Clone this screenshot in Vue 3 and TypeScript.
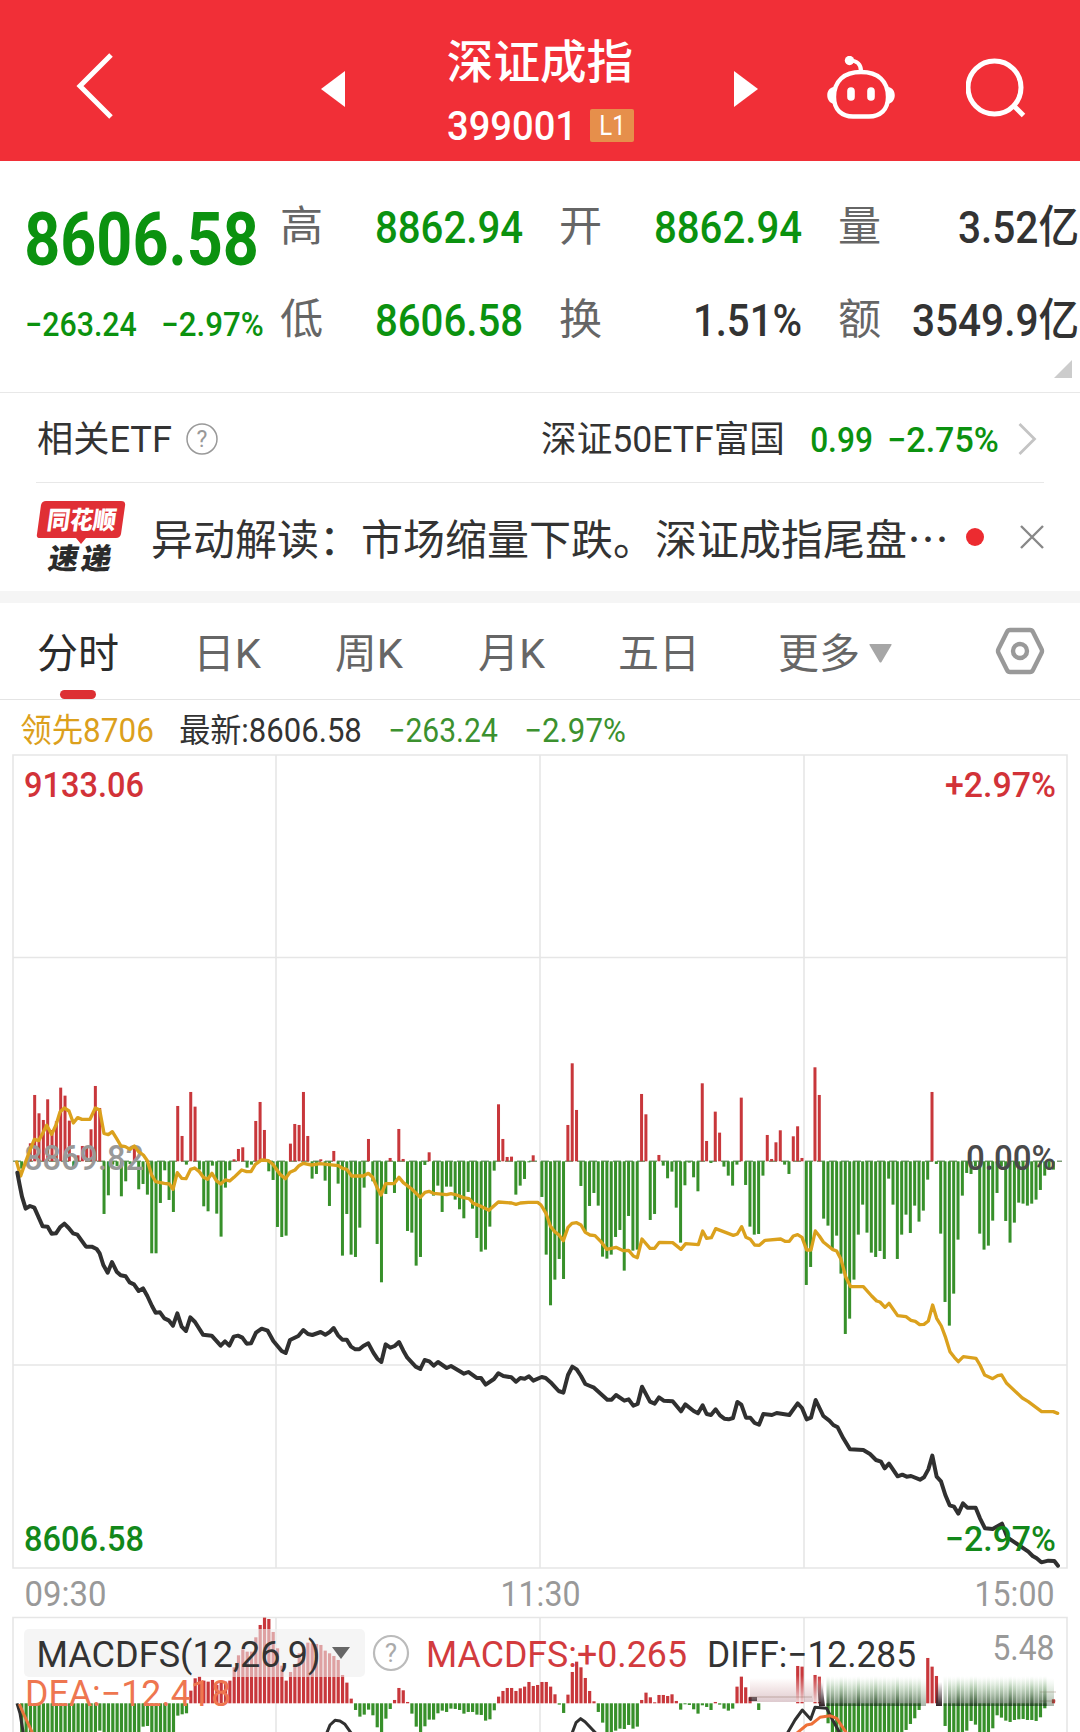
<script setup lang="ts">
import { defineComponent, h } from 'vue'

const FONT = 'Roboto, "Noto Sans CJK SC", sans-serif'

// One line of text fitted to a fixed width, centred on its own box
const T = defineComponent({
  props: {
    t: { type: String, required: true },
    w: { type: Number, required: true },
    s: { type: Number, required: true },
    c: { type: String, default: '#333' },
    b: { type: Number, default: 400 },
  },
  setup(p) {
    return () =>
      h('svg', { width: p.w, height: p.s, style: 'display:block;overflow:visible;flex:none' }, [
        h('text', {
          x: -p.s * 0.025, y: p.s * 0.856, textLength: p.w + p.s * 0.05, lengthAdjust: 'spacingAndGlyphs',
          'font-size': p.s, 'font-weight': p.b, 'font-family': FONT, fill: p.c,
        }, p.t),
      ])
  },
})

const GREEN = '#0b920f'
const quotes = [
  [
    { k: '高', v: '8862.94', w: 146, c: GREEN },
    { k: '开', v: '8862.94', w: 146, c: GREEN },
    { k: '量', v: '3.52亿', w: 119, c: '#333' },
  ],
  [
    { k: '低', v: '8606.58', w: 146, c: GREEN },
    { k: '换', v: '1.51%', w: 107, c: '#333' },
    { k: '额', v: '3549.9亿', w: 165, c: '#333' },
  ],
]

const STEP = 13.005
const bars = [
  -3, -22, -10, 54, 199, 144, 124, 186, 94, 120, 221, 197, 122, -18, 18, 46, 46, 96, 226, 160,
  -158, -102, -10, -14, -105, -60, -8, 42, -84, -68, -100, -276, -276, -125, -27, -116, -152, 166, 76, -10,
  208, 164, -25, -135, -150, -13, -157, -226, -79, -27, 6, 37, 42, -19, -10, 121, 178, 94, -30, -56,
  -197, -227, -223, 53, 112, 109, 208, 76, -52, -38, 6, -58, -134, 31, -67, -283, -158, -280, -287, -199,
  -79, 67, -60, -248, -363, -98, 10, -95, 97, 7, -209, -214, -313, -287, -11, 27, -103, -73, -152, -76,
  -76, -115, -144, -171, -92, -142, -230, -271, -265, -196, -28, 171, 67, 13, 14, -100, -73, -53, -3, 18,
  0, -107, -280, -432, -355, -293, -353, 109, 294, 154, -74, -210, -134, -95, -133, -286, -292, -280, -227, -206,
  -328, -164, -268, -265, 202, 141, -176, -158, 19, -13, -51, -31, -139, -244, -72, -4, -48, -90, 234, 61,
  -5, 149, 86, -16, -43, -73, -10, 191, -71, -196, -220, -218, -43, 79, 7, 57, 93, -10, -38, 75,
  105, 10, -371, -317, 282, 199, -172, -193, -260, -223, -337, -518, -472, -355, -220, -130, -214, -274, -287, -269,
  -293, -52, -130, -293, -220, -160, -215, -133, -181, -148, -55, 208, -8, -217, -422, -493, -397, -235, -103, -35,
  -38, -16, -217, -265, -253, -178, -95, -15, -179, -244, -184, -124, -127, -133, -127, -115, -86, -43, -25, -25,
]
const F = -92
const macd = [
  0, F, F, F, F, F, F, F, F, F, F, F, F, F, F, F, F, F, F, -82,
  F, F, F, F, F, F, F, F, F, -70, -68, F, F, F, F, F, F, -37, -33, -30,
  38, 75, 80, 68, 65, 70, 55, 65, 65, 68, 108, 144, 162, 155, 155, 198, 235, 257, 253, 214,
  165, 113, 68, 94, 118, 150, 168, 182, 180, 178, 175, 158, 150, 142, 130, 85, 62, 14, -20, -40,
  -34, -19, -36, -72, F, -46, -17, 10, 46, 39, 4, -31, -70, F, -69, -49, -49, -30, -22, -26,
  -16, -17, -20, -31, -26, -26, -34, -35, -52, -48, -21, 20, 37, 46, 46, 37, 45, 50, 64, 52,
  55, 64, 64, 50, 27, -4, -29, 26, 94, 125, 108, 76, 37, 6, -26, -58, F, F, -82, -76,
  -77, -65, -76, -70, 10, 32, 18, 3, 25, 25, 22, 27, 7, -19, -3, -5, -18, -31, -6, -11,
  -20, 4, -4, -16, -22, -16, 50, 80, 48, 18, 0, -20, 0, 0, 0, 0, 0, 0, 0, 0,
  112, 110, 0, 0, 85, 80, 0, -60, F, F, F, F, F, F, F, F, F, F, F, F,
  F, F, F, F, F, -80, -62, -45, -20, 0, 136, 110, 82, 0, -68, F, F, F, F, -82,
  -53, -64, F, F, F, -75, -36, -43, -52, -56, -50, -48, -47, -50, -50, -53, -42, -15, 0, 12,
]

const columns = (data: number[]) =>
  data.map((v, i) => ({ x: 47.5 + i * STEP, y: v > 0 ? -v : 0, h: Math.abs(v), c: v > 0 ? '#c8373b' : '#37902a' })).filter(d => d.h > 0)
const priceBars = columns(bars)
const macdBars = columns(macd)

// Fading bars on the right of the indicator panel
const fading = macd
  .map((v, i) => ({ i, x: 47.5 + i * STEP }))
  .filter(d => (d.i >= 187 && d.i <= 208) || (d.i >= 214 && d.i <= 237))
  .map(d => ({ x: d.x / 3, o: [187, 190, 194, 198, 203, 217, 220, 221, 229, 234, 237].includes(d.i) ? 0.85 : 0.4 + (d.i % 3) * 0.1 }))

// Every polyline segment list starts at its own horizontal offset
const shift = (dx: number, dy: number, s: string) =>
  s.split(' ').map(p => { const [x, y] = p.split(',').map(Number); return `${x + dx},${y + dy}` }).join(' ')

const price = [
  shift(0, 0, '52,398 58,430 66,470 77,506 90,498 103,503 116,532 128,559 143,560 155,581 168,580 180,562 193,551 206,564 219,580 232,584 258,620 275,620 290,627 299,640 310,675 323,698 336,666 350,695 362,706 377,709 389,727 402,733 416,753 429,745 442,768 456,798 467,818 480,817 493,835 506,841 519,857 532,820 545,860 558,873 571,832 585,846 609,884 635,887 662,917 675,904 688,917 701,890 714,887 727,893 740,911 753,910 768,878 785,866 803,872 820,903'),
  shift(810, 0, '35,933 47,939 60,900 85,888 100,870 114,882 127,885 152,876 166,884 178,877 191,864 204,886 217,899 230,899 243,920 256,928 268,928 280,918 295,910 310,938 322,956 334,966 347,913 361,923 374,918 387,906 400,932 412,953 437,980 451,987 464,960 478,964 491,977 504,966 530,984 543,978 582,1001 595,996 620,1014 633,1014 647,1034 672,1017 685,1000 700,1008 724,1012 738,1025 751,1014 764,1016 777,1009 790,1022'),
  shift(1620, 0, '5,1011 17,1014 35,1030 56,1053 70,1058 84,1005 97,980 110,988 123,1008 136,1032 150,1038 162,1043 202,1079 215,1079 228,1065 253,1082 266,1078 280,1097 293,1092 306,1040 330,1085 344,1091 357,1072 371,1082 398,1084 423,1114 436,1093 461,1113 474,1120 488,1096 500,1122 513,1125 527,1108 540,1126 553,1136 566,1138 579,1134 592,1086 604,1094 618,1133 631,1133 644,1149 657,1154 670,1122 696,1125 710,1119 748,1125 773,1090 786,1104 800,1138 813,1133'),
  shift(2160, 900, '287,180 310,228 328,242 340,255 353,262 370,295 390,328 430,330 450,342 468,360 483,365 494,385 507,371 533,409 547,404 560,410 573,408 600,419 612,412 625,388 637,347 650,410 663,424 676,465 689,496 702,500 715,521 729,490 742,503 767,503 780,535 795,565 818,567 846,551 862,592 925,635 938,648 950,655 964,667 985,662 1003,663 1014,677'),
].join(' ')

const lead = [
  shift(0, 0, '50,366 62,408 76,368 90,330 103,298 116,302 128,280 140,256 155,283 168,255 180,216 193,204 207,213 220,249 233,233 246,238 270,238 286,204 299,210 312,280 325,284 337,275 350,296 363,318 376,320 390,328 403,318 416,335 430,345 442,362 455,405 467,425 493,430 508,432 519,448 532,398 545,415 558,416 572,388 584,384 597,394 610,412 623,418 636,400 649,422 662,432 676,420 689,423 702,412 725,390 740,395 753,395 766,373 785,360 805,362 818,372'),
  shift(810, 0, '30,403 46,416 60,397 75,390 87,377 100,370 125,375 150,371 205,377 218,385 230,388 245,408 280,408 295,400 308,412 320,440 333,465 347,431 372,431 387,412 400,428 425,447 451,472 465,457 477,454 490,460 530,464 543,461 560,465 580,473 597,476 610,490 635,500 657,511 685,486 725,489 738,493 751,489 775,487 803,487'),
  shift(1620, 0, '3,495 18,520 31,558 44,575 57,585 70,602 84,562 96,550 110,548 123,555 136,577 150,585 165,587 182,604 200,628 228,622 250,632 266,631 280,648 292,653 306,597 330,625 344,625 358,607 398,608 423,628 437,611 475,614 488,573 500,595 514,593 527,566 580,586 592,582 605,560 618,592 631,598 644,615 658,616 675,601 722,597 735,604 748,604 760,588 773,584 786,592 800,630 813,630'),
  shift(2400, 0, '46,573 58,588 70,606 97,628 110,633 123,658 137,710 152,740 190,740 215,768 230,783 240,786 255,802 267,790 293,827 318,830 333,841 346,844 359,854 372,853 385,843 398,795 410,835 424,858 437,893 450,935 463,952 475,965 490,950 528,955 540,975 554,1005 578,1016 593,1007 605,1005 620,1030 667,1074 685,1085 725,1115 760,1115 773,1120'),
].join(' ')

// x, baseline, ink width, size, colour, weight
const labels = [
  { t: '9133.06', x: 25, y: 797, w: 118, s: 35, c: '#d23238', b: 500 },
  { t: '+2.97%', x: 946, y: 797, w: 109, s: 35, c: '#d23238', b: 500 },
  { t: '8869.82', x: 25, y: 1170, w: 118, s: 35, c: '#999', b: 500 },
  { t: '0.00%', x: 967, y: 1170, w: 88, s: 35, c: '#4a4a4a', b: 500 },
  { t: '8606.58', x: 25, y: 1551, w: 118, s: 35, c: '#12881a', b: 500 },
  { t: '−2.97%', x: 946, y: 1551, w: 109, s: 35, c: '#12881a', b: 500 },
  { t: '09:30', x: 25.5, y: 1606, w: 80, s: 35, c: '#999', b: 400 },
  { t: '11:30', x: 501.5, y: 1606, w: 78, s: 35, c: '#999', b: 400 },
  { t: '15:00', x: 975.5, y: 1606, w: 78, s: 35, c: '#999', b: 400 },
  { t: 'MACDFS(12,26,9)', x: 37.5, y: 1667, w: 282, s: 36, c: '#333', b: 400 },
  { t: 'MACDFS:+0.265', x: 427, y: 1666.5, w: 259, s: 36, c: '#d23b3e', b: 400 },
  { t: 'DIFF:−12.285', x: 708, y: 1666.5, w: 207, s: 36, c: '#333', b: 400 },
  { t: '5.48', x: 993.5, y: 1660, w: 60, s: 35, c: '#999', b: 400 },
  { t: 'DEA:−12.418', x: 26, y: 1706, w: 204, s: 36, c: '#ee7650', b: 400 },
]
</script>

<template>
  <div class="page">
    <header class="head">
      <svg class="back" width="44" height="70"><path d="M41 4 10 35 41 66" fill="none" stroke="#fff" stroke-width="5" /></svg>
      <svg class="prev" width="24" height="36"><path d="M0 18 24 0V36Z" fill="#fff" /></svg>
      <div class="title">
        <T t="深证成指" :w="184" :s="46" c="#fff" :b="500" />
        <div class="code">
          <T t="399001" :w="128" :s="41" c="#fff" :b="500" />
          <span class="level"><T t="L1" :w="25" :s="27" c="#fff" /></span>
        </div>
      </div>
      <svg class="next" width="24" height="36"><path d="M24 18 0 0V36Z" fill="#fff" /></svg>
      <svg class="robot" width="70" height="64" fill="none" stroke="#fff">
        <path d="M35 16C52 16 62 25 62 41C62 54 54 60.500 43 60.500H27C16 60.500 8 54 8 41C8 25 18 16 35 16Z" stroke-width="4.400" />
        <path d="M35 15C35 9 31 4.500 24 4.500" stroke-width="4.200" />
        <circle cx="23.500" cy="4.500" r="4.700" fill="#fff" stroke="none" />
        <path d="M8 31C-1 32-1 46 8 48ZM62 31C71 32 71 46 62 48Z" fill="#fff" stroke="none" />
        <path d="M25 35V41M45 35V41" stroke-width="7.600" stroke-linecap="round" />
      </svg>
      <svg class="search" width="62" height="62" fill="none" stroke="#fff"><circle cx="28.500" cy="29.500" r="26.500" stroke-width="5" /><path d="M48 48 57.500 57.500" stroke-width="5" /></svg>
    </header>

    <section class="quote">
      <div class="last">
        <T t="8606.58" :w="231" :s="74.5" :c="GREEN" :b="700" />
        <div class="chg"><T t="−263.24" :w="110" :s="33" :c="GREEN" :b="500" /><T t="−2.97%" :w="101" :s="33" :c="GREEN" :b="500" /></div>
      </div>
      <div class="rows">
        <div v-for="(r, i) in quotes" :key="i" class="row">
          <div v-for="q in r" :key="q.k" class="cell"><T :t="q.k" :w="41" :s="42.5" c="#666" /><T :t="q.v" :w="q.w" :s="45" :c="q.c" :b="500" /></div>
        </div>
      </div>
      <i class="corner"></i>
    </section>

    <section class="etf">
      <T t="相关ETF" :w="133" :s="36" />
      <svg class="q" width="32" height="32"><circle cx="16" cy="16" r="15" fill="none" stroke="#999" stroke-width="1.500" /><text x="16" y="24" text-anchor="middle" font-family="Roboto, sans-serif" font-size="23" fill="#999">?</text></svg>
      <div class="etf-right">
        <T t="深证50ETF富国" :w="242" :s="36" />
        <T t="0.99" :w="61" :s="35" :c="GREEN" :b="500" />
        <T t="−2.75%" :w="110" :s="35" :c="GREEN" :b="500" />
        <svg class="go" width="19" height="34"><path d="M1.500 2 16.500 17 1.500 32" fill="none" stroke="#c4c4c4" stroke-width="2.800" /></svg>
      </div>
    </section>

    <section class="news">
      <svg class="brand" width="90" height="76">
        <path d="M9 0H84Q89 0 88 5L84 33Q83 37 79 37H49L44 43 39 37H3Q-1 37 0 33L4 4Q5 0 9 0Z" fill="#e02f35" />
        <g font-family="'Noto Sans CJK SC', sans-serif" font-weight="900" font-size="26">
          <text transform="translate(9 28) skewX(-8)" textLength="69" lengthAdjust="spacingAndGlyphs" fill="#fff" font-size="25">同花顺</text>
          <text transform="translate(10 68) skewX(-10)" fill="#2b2b2b" textLength="30" lengthAdjust="spacingAndGlyphs" font-size="29">速</text>
          <text transform="translate(43 68) skewX(-10)" fill="#2b2b2b" textLength="30" lengthAdjust="spacingAndGlyphs" font-size="29">递</text>
        </g>
      </svg>
      <span class="headline">异动解读：市场缩量下跌。深证成指尾盘…</span>
      <i class="dot"></i>
      <svg class="close" width="26" height="26"><path d="M2 2 24 24M24 2 2 24" stroke="#888" stroke-width="2.400" /></svg>
    </section>

    <nav class="tabs">
      <div class="tab"><T t="分时" :w="80" :s="40.5" c="#2b2b2b" :b="400" /></div>
      <T class="t2" t="日K" :w="66" :s="40.5" c="#666" />
      <T class="t3" t="周K" :w="66" :s="40.5" c="#666" />
      <T class="t4" t="月K" :w="65" :s="40.5" c="#666" />
      <T class="t5" t="五日" :w="80" :s="40.5" c="#666" />
      <T class="t6" t="更多" :w="80" :s="40.5" c="#666" />
      <svg class="more" width="23" height="19"><path d="M1 0H22Q23 0 22.500 1L12.500 18Q11.500 19 10.500 18L.5 1Q0 0 1 0Z" fill="#a6a6a6" /></svg>
      <svg class="gear" width="50" height="48" fill="none" stroke="#999" stroke-width="4.400"><path d="M15 3H35Q37 3 38 5L46.500 22Q47.500 24 46.500 26L38 43Q37 45 35 45H15Q13 45 12 43L3.500 26Q2.500 24 3.500 22L12 5Q13 3 15 3Z" /><circle cx="25" cy="24" r="7" /></svg>
    </nav>

    <div class="legend">
      <T t="领先8706" :w="132" :s="32.5" c="#dca01c" />
      <T class="l2" t="最新:8606.58" :w="181" :s="32.5" />
      <T class="l3" t="−263.24" :w="108" :s="32.5" c="#3c912f" />
      <T class="l4" t="−2.97%" :w="100" :s="32.5" c="#3c912f" />
    </div>

    <svg class="chart" width="1080" height="978" viewBox="0 754 1080 978">
      <defs>
        <linearGradient id="fade" x1="0" y1="0" x2="0" y2="1"><stop offset="0" stop-color="#b8d8b4" stop-opacity="0" /><stop offset=".35" stop-color="#94b890" stop-opacity=".6" /><stop offset=".75" stop-color="#42663f" stop-opacity=".85" /><stop offset="1" stop-color="#1d3a1e" /></linearGradient>
        <linearGradient id="haze" x1="0" y1="0" x2="0" y2="1"><stop offset="0" stop-color="#a33" stop-opacity="0" /><stop offset="1" stop-color="#845" stop-opacity=".28" /></linearGradient>
        <linearGradient id="wash" x1="0" y1="0" x2="0" y2="1"><stop offset="0" stop-color="#fff" stop-opacity="0" /><stop offset="1" stop-color="#fff" stop-opacity=".75" /></linearGradient>
        <linearGradient id="dusk" x1="0" y1="0" x2="0" y2="1"><stop offset="0" stop-color="#412f34" stop-opacity="0" /><stop offset="1" stop-color="#301f24" /></linearGradient>
      </defs>
      <g fill="none" stroke="#e6e6e6" stroke-width="1.600">
        <path d="M13 755H1067V1568H13ZM13 957.500H1067M13 1365H1067M276 755V1568M540 755V1568M804 755V1568" />
        <path d="M13 1740V1617.500H1067V1740M276 1618V1732M540 1618V1732M804 1618V1732" />
      </g>
      <path d="M13 1161.300H1062" stroke="#7d9c76" stroke-width="1.600" stroke-dasharray="8 4" />
      <g transform="translate(0 1161.300) scale(.33333)">
        <rect v-for="(b, i) in priceBars" :key="i" :x="b.x" :y="b.y" width="9" :height="b.h" :fill="b.c" />
      </g>
      <g transform="translate(0 1703.300) scale(.33333)">
        <rect v-for="(b, i) in macdBars" :key="i" :x="b.x" :y="b.y" width="9.600" :height="b.h" :fill="b.c" />
      </g>
      <rect x="24" y="1629" width="341" height="48" rx="5" fill="#eee" fill-opacity=".58" />
      <path d="M332 1647H350L341 1659Z" fill="#666" />
      <g>
        <text v-for="l in labels.slice(0, 4)" :key="l.t" :x="l.x - 1" :y="l.y" :font-size="l.s" :font-weight="l.b" :textLength="l.w + 2" lengthAdjust="spacingAndGlyphs" :fill="l.c">{{ l.t }}</text>
      </g>
      <g transform="translate(0 1040) scale(.33333)" fill="none" stroke-linejoin="round" stroke-linecap="round">
        <polyline :points="lead" stroke="#dba11d" stroke-width="10" />
        <polyline :points="price" stroke="#303030" stroke-width="12" />
      </g>
      <rect x="750" y="1678" width="74" height="24" fill="url(#haze)" />
      <path d="M796 1675H804V1702H796ZM813 1675H824V1702H813Z" fill="url(#wash)" />
      <path d="M749 1697H812M1040 1692H1056M1040 1701H1056" stroke="#865" stroke-opacity=".4" />
      <path d="M749 1697H757V1701H749ZM817 1682H822L825 1706H819ZM936 1682H942V1706H936Z" fill="url(#dusk)" />
      <rect x="830" y="1678" width="96" height="28" fill="url(#fade)" opacity=".38" />
      <rect x="948" y="1678" width="106" height="28" fill="url(#fade)" opacity=".38" />
      <rect v-for="(f, i) in fading" :key="'f' + i" :x="f.x" y="1676" width="3.300" height="30" fill="url(#fade)" :opacity="f.o" />
      <g transform="translate(0 1500) scale(.33333)" fill="none" stroke-linejoin="round" stroke-width="9">
        <polyline points="51,610 60,640 70,700" stroke="#303030" />
        <polyline points="58,612 70,640 98,700" stroke="#e8743c" />
        <polyline points="980,700 990,675 1005,661 1020,663 1035,673 1054,700" stroke="#303030" />
        <polyline points="1716,700 1728,668 1742,656 1755,665 1788,700" stroke="#303030" />
        <polyline points="2362,700 2385,660 2407,630 2432,658 2445,622 2480,625 2500,664 2520,700" stroke="#303030" />
        <polyline points="2390,700 2420,675 2435,672 2460,652 2490,647 2510,655 2540,700" stroke="#ee7038" />
      </g>
      <g>
        <text v-for="l in labels.slice(4)" :key="l.t" :x="l.x - 1" :y="l.y" :font-size="l.s" :font-weight="l.b" :textLength="l.w + 2" lengthAdjust="spacingAndGlyphs" :fill="l.c">{{ l.t }}</text>
      </g>
      <circle cx="391" cy="1653" r="17" fill="none" stroke="#bbb" stroke-width="2.200" />
      <text x="391" y="1662" text-anchor="middle" font-size="26" fill="#aaa">?</text>
    </svg>
  </div>
</template>

<style scoped>
.page { width: 1080px; height: 1732px; overflow: hidden; background: #fff; font-family: Roboto, "Noto Sans CJK SC", sans-serif; }
svg { display: block; flex: none; }
.head { height: 161px; box-sizing: border-box; background: #f12f37; display: flex; align-items: flex-start; padding-left: 70px; }
.back { margin-top: 51px; }
.prev { margin: 71px 0 0 207px; }
.title { margin: 39px 0 0 103px; width: 187px; }
.code { display: flex; align-items: center; margin-top: 23px; height: 35px; }
.level { display: flex; align-items: center; justify-content: center; margin-left: 14px; width: 44px; height: 33px; background: #e68f4b; border-radius: 2px; }
.next { margin: 71px 0 0 99px; }
.robot { margin: 56px 0 0 68px; }
.search { margin: 58px 0 0 70px; }
.quote { height: 231px; display: flex; position: relative; border-bottom: 1.500px solid #e8e8e8; }
.last { width: 255px; padding: 40px 0 0 26px; }
.chg { display: flex; gap: 26px; margin-top: 32px; }
.rows { padding-top: 19px; }
.row { height: 93px; display: flex; gap: 38px; }
.cell { width: 241px; display: flex; align-items: center; justify-content: space-between; }
.cell:last-child { width: 239px; }
.corner { position: absolute; right: 8px; bottom: 14px; width: 18px; height: 18px; background: #ccc; clip-path: polygon(100% 0, 100% 100%, 0 100%); }
.etf { height: 90px; box-sizing: border-box; margin: 0 36px; padding: 3px 0 0 2px; display: flex; align-items: center; border-bottom: 1.500px solid #e8e8e8; }
.q { margin-left: 15px; }
.etf-right { margin-left: auto; margin-right: 7px; display: flex; align-items: center; }
.etf-right > :nth-child(2) { margin-left: 27px; }
.etf-right > :nth-child(3) { margin-left: 16px; }
.go { margin-left: 20px; }
.news { height: 108px; padding-left: 37px; display: flex; align-items: center; }
.brand { margin-top: 4px; overflow: visible; }
.headline { margin-left: 24px; width: 798px; font: 42px/60px "Noto Sans CJK SC", sans-serif; color: #333; white-space: nowrap; }
.dot { margin-left: 17px; width: 18px; height: 18px; border-radius: 50%; background: #ec2b30; }
.close { margin-left: 35px; }
.tabs { height: 109px; box-sizing: border-box; padding: 4px 0 0 38px; border-top: 12px solid #f5f5f5; border-bottom: 1.500px solid #e4e4e4; display: flex; align-items: center; }
.tab { position: relative; }
.tab::after { content: ""; position: absolute; left: 22px; top: 57px; width: 36px; height: 9px; border-radius: 5px; background: #dd2f33; }
.t2 { margin-left: 76px; }
.t3 { margin-left: 76px; }
.t4 { margin-left: 77px; }
.t5 { margin-left: 75px; }
.t6 { margin-left: 80px; }
.more { margin-left: 10px; }
.gear { margin-left: 103px; margin-top: -4px; }
.legend { height: 54px; padding: 6px 0 0 21px; box-sizing: border-box; display: flex; align-items: center; }
.l2 { margin-left: 27px; }
.l3 { margin-left: 28px; }
.l4 { margin-left: 28px; }
.chart { font-family: Roboto, "Noto Sans CJK SC", sans-serif; }
</style>
